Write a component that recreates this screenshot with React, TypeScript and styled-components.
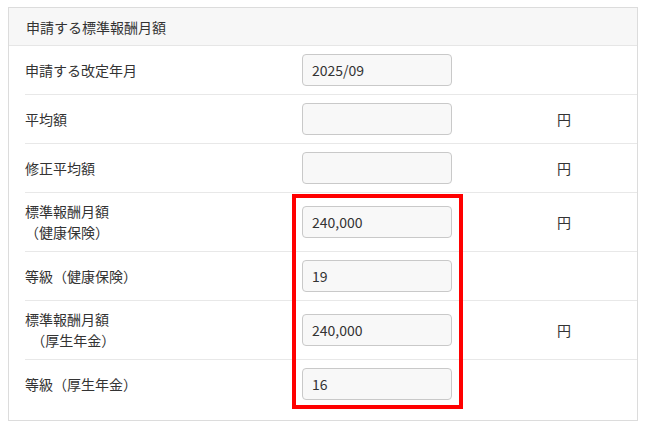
import React from "react";
import styled, { createGlobalStyle } from "styled-components";

const GlobalStyle = createGlobalStyle`
    body {
        margin: 0;
        background: #ffffff;
        font-family: "Noto Sans CJK JP", "Noto Sans", sans-serif;
        color: #333333;
    }
`;

const Page = styled.div`
    padding: 7px 9px 6px 8px;
`;

const Panel = styled.section`
    position: relative;
    width: 630px;
    box-sizing: border-box;
    border: 1px solid #dcdcdc;
    background: #ffffff;
`;

const PanelHeader = styled.div`
    height: 37px;
    display: flex;
    align-items: center;
    padding-left: 17px;
    background: #f7f7f7;
    border-bottom: 1px solid #e6e6e6;
    font-size: 14px;
`;

const PanelBody = styled.div`
    padding: 0 0 12px 16px;
`;

const Row = styled.div<{ last?: boolean }>`
    display: grid;
    grid-template-columns: 277px 255px 1fr;
    align-items: center;
    padding: 8px 0;
    border-bottom: ${(p) => (p.last ? "none" : "1px solid #e8e8e8")};
`;

const Label = styled.div`
    font-size: 14px;
    line-height: 21px;
    white-space: pre;
`;

const Field = styled.div`
    width: 150px;
    height: 32px;
    box-sizing: border-box;
    display: flex;
    align-items: center;
    padding: 0 9px;
    background: #f8f8f8;
    border: 1px solid #c9c9c9;
    border-radius: 4px;
    font-size: 14px;
    color: #333333;
`;

const Unit = styled.div`
    font-size: 14px;
`;

const Highlight = styled.div`
    position: absolute;
    left: 283px;
    top: 186px;
    width: 171px;
    height: 215px;
    box-sizing: border-box;
    border: 4px solid #ff0000;
    pointer-events: none;
`;

const ROWS = [
    { label: "申請する改定年月", value: "2025/09", unit: "" },
    { label: "平均額", value: "", unit: "円" },
    { label: "修正平均額", value: "", unit: "円" },
    { label: "標準報酬月額\n（健康保険）", value: "240,000", unit: "円" },
    { label: "等級（健康保険）", value: "19", unit: "" },
    { label: "標準報酬月額\n\u00a0\u00a0（厚生年金）", value: "240,000", unit: "円" },
    { label: "等級（厚生年金）", value: "16", unit: "" },
];

export default function App() {
    return (
        <>
            <GlobalStyle />
            <Page>
                <Panel>
                    <PanelHeader>申請する標準報酬月額</PanelHeader>
                    <PanelBody>
                        {ROWS.map((r, i) => (
                            <Row key={i} last={i === ROWS.length - 1}>
                                <Label>{r.label}</Label>
                                <Field>{r.value}</Field>
                                <Unit>{r.unit}</Unit>
                            </Row>
                        ))}
                    </PanelBody>
                    <Highlight />
                </Panel>
            </Page>
        </>
    );
}
